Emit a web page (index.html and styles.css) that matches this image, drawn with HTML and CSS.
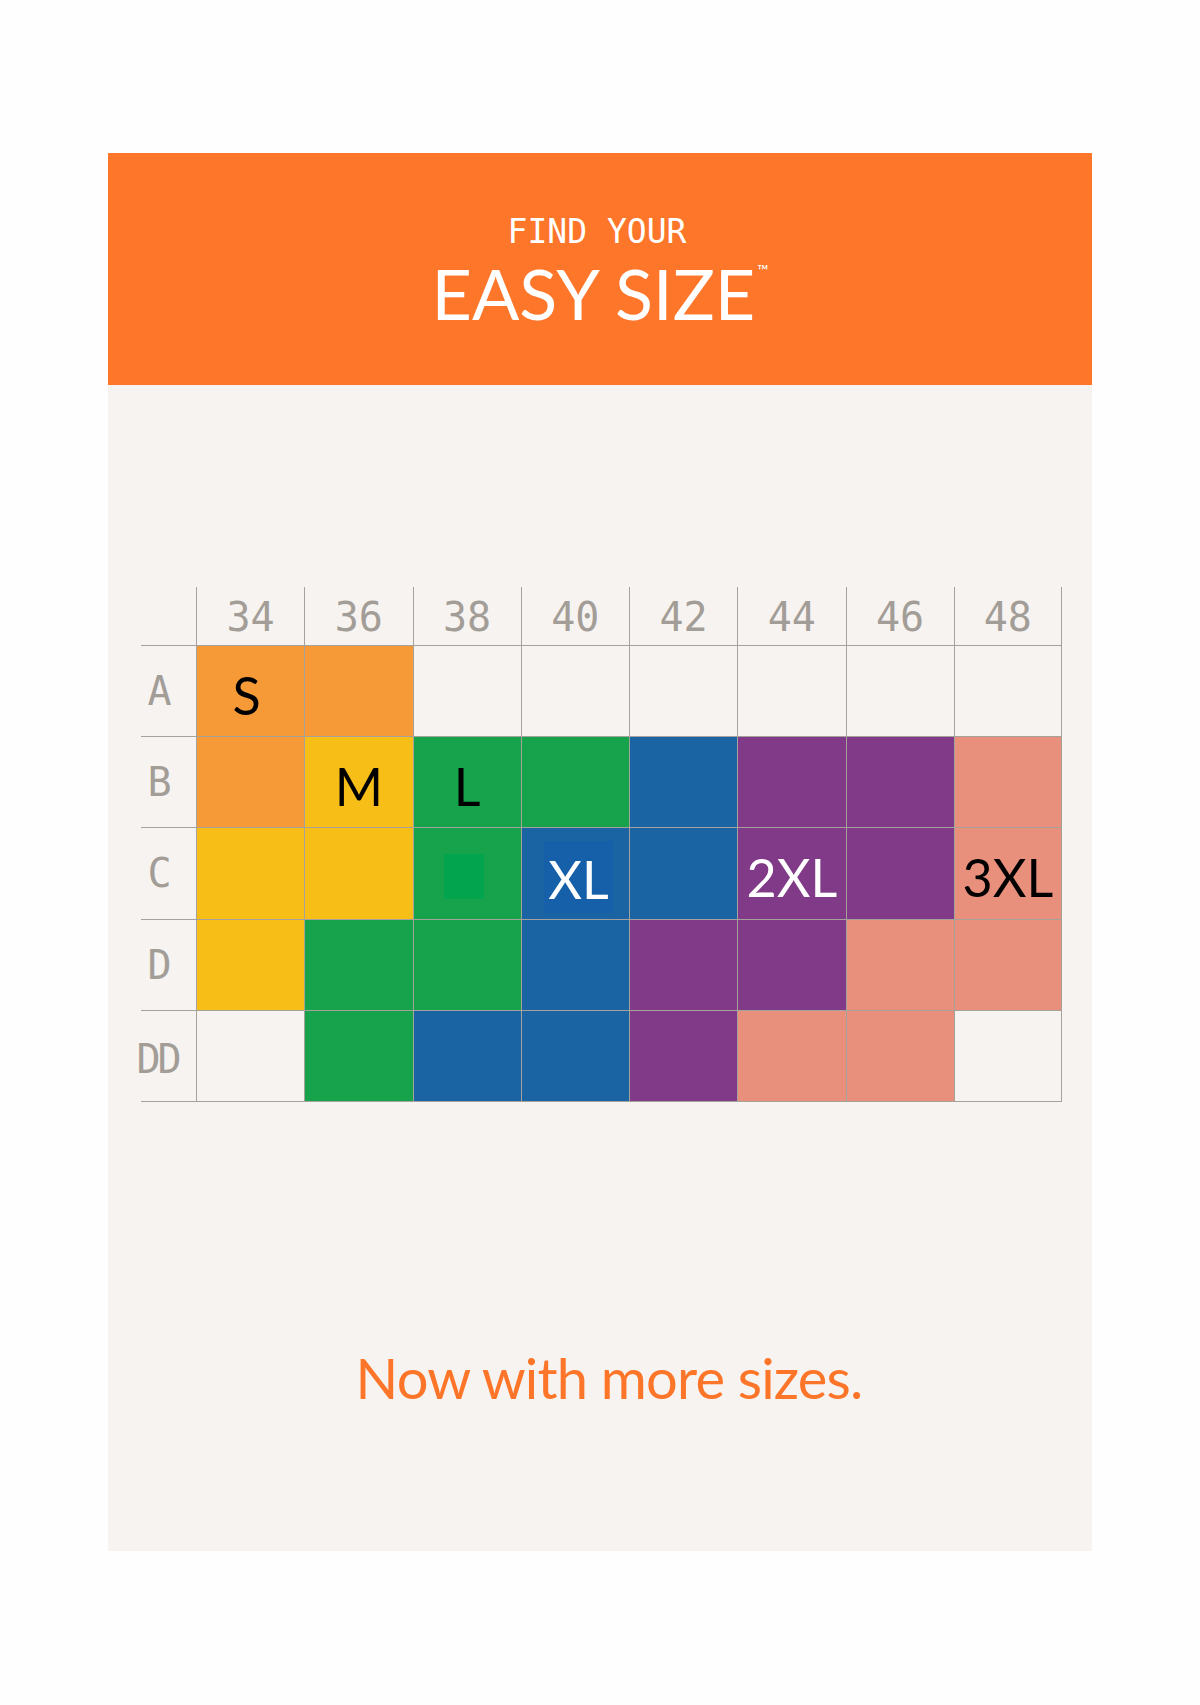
FILE: index.html
```html
<!DOCTYPE html>
<html lang="en">
<head>
<meta charset="utf-8">
<title>Find your Easy Size</title>
<link rel="stylesheet" href="styles.css">
</head>
<body>
<div class="card">
  <header class="banner">
    <div class="kicker">FIND YOUR</div>
    <h1 class="title">EASY SIZE<sup class="tm">™</sup></h1>
  </header>

  <div class="chart">
    <div class="corner"></div>
    <div class="num">34</div><div class="num">36</div><div class="num">38</div><div class="num">40</div>
    <div class="num">42</div><div class="num">44</div><div class="num">46</div><div class="num last">48</div>

    <div class="lab">A</div>
    <div class="cell c-orange"><span class="sz s">S</span></div>
    <div class="cell c-orange"></div>
    <div class="cell"></div><div class="cell"></div><div class="cell"></div>
    <div class="cell"></div><div class="cell"></div><div class="cell last"></div>

    <div class="lab">B</div>
    <div class="cell c-orange"></div>
    <div class="cell c-yellow"><span class="sz">M</span></div>
    <div class="cell c-green"><span class="sz">L</span></div>
    <div class="cell c-green"></div>
    <div class="cell c-blue"></div>
    <div class="cell c-purple"></div>
    <div class="cell c-purple"></div>
    <div class="cell c-salmon last"></div>

    <div class="lab">C</div>
    <div class="cell c-yellow"></div>
    <div class="cell c-yellow"></div>
    <div class="cell c-green"><span class="dot"></span></div>
    <div class="cell c-blue"><span class="sz hl">XL</span></div>
    <div class="cell c-blue"></div>
    <div class="cell c-purple"><span class="sz white">2XL</span></div>
    <div class="cell c-purple"></div>
    <div class="cell c-salmon last"><span class="sz">3XL</span></div>

    <div class="lab">D</div>
    <div class="cell c-yellow"></div>
    <div class="cell c-green"></div>
    <div class="cell c-green"></div>
    <div class="cell c-blue"></div>
    <div class="cell c-purple"></div>
    <div class="cell c-purple"></div>
    <div class="cell c-salmon"></div>
    <div class="cell c-salmon last"></div>

    <div class="lab dd">DD</div>
    <div class="cell"></div>
    <div class="cell c-green"></div>
    <div class="cell c-blue"></div>
    <div class="cell c-blue"></div>
    <div class="cell c-purple"></div>
    <div class="cell c-salmon"></div>
    <div class="cell c-salmon"></div>
    <div class="cell last"></div>
  </div>

  <p class="tagline">Now with more sizes.</p>
</div>
</body>
</html>
```
FILE: styles.css
```css
* { box-sizing: border-box; }

body {
  margin: 0;
  background: #fefefe;
  font-family: "Lato", "Open Sans", sans-serif;
}

.card {
  width: 984px;
  height: 1398px;
  margin: 153px 0 0 108px;
  background: #f7f3f0;
  overflow: hidden;
}

.banner {
  height: 232px;
  background: #fe762a;
  display: flex;
  flex-direction: column;
  align-items: center;
  padding-top: 62px;
  color: #fff;
}

.kicker {
  font-family: "DejaVu Sans Mono", "Liberation Mono", monospace;
  font-size: 33px;
  line-height: 33px;
  font-weight: normal;
  padding-right: 6px;
}

.title {
  margin: 10px 0 0 0;
  font-family: "Lato", sans-serif;
  font-weight: 400;
  font-size: 70px;
  line-height: 70px;
}

.tm {
  font-size: 15px;
  line-height: 1;
  vertical-align: 44px;
  margin-left: 2px;
}

.chart {
  margin: 202px 0 0 33px;
  display: grid;
  grid-template-columns: 55px repeat(8, 108.25px);
  grid-template-rows: 59px repeat(5, 91.2px);
  width: 921px;
}

.corner { border-bottom: 1px solid #a7a19c; }

.num {
  border-left: 1px solid #a7a19c;
  border-bottom: 1px solid #a7a19c;
  font-family: "DejaVu Sans Mono", monospace;
  font-size: 40px;
  color: #a39d98;
  display: flex;
  align-items: center;
  justify-content: center;
  padding-top: 2px;
}

.num.last, .cell.last { border-right: 1px solid #a7a19c; }

.lab {
  border-bottom: 1px solid #a7a19c;
  font-family: "DejaVu Sans Mono", monospace;
  font-size: 40px;
  color: #a39d98;
  display: flex;
  align-items: center;
  justify-content: center;
  padding-right: 18px;
}

.lab.dd { letter-spacing: -3px; padding-right: 22px; padding-top: 6px; }

.cell {
  border-left: 1px solid #a7a19c;
  border-bottom: 1px solid #a7a19c;
  display: flex;
  align-items: center;
  justify-content: center;
}

.c-orange { background: #f69a38; }
.c-yellow { background: #f6be17; }
.c-green  { background: #16a34b; }
.c-blue   { background: #1b64a4; }
.c-purple { background: #813a87; }
.c-salmon { background: #e8907b; }

.sz {
  font-family: "Lato", sans-serif;
  font-size: 52px;
  line-height: 1;
  color: #000;
  padding-top: 8px;
}

.sz.s { margin-right: 8px; }

.sz.white { color: #fff; }

.sz.hl {
  color: #fff;
  background: #1560a8;
  padding: 12px 4px 8px;
  margin-top: 8px;
  margin-left: 6px;
}

.dot {
  width: 40px;
  height: 45px;
  background: #02a54e;
  margin-top: 6px;
  margin-right: 6px;
}

.tagline {
  margin: 247px 0 0 0;
  padding-left: 18px;
  text-align: center;
  font-family: "Lato", sans-serif;
  font-size: 56px;
  line-height: 58px;
  letter-spacing: -0.8px;
  color: #fd7529;
}
```
